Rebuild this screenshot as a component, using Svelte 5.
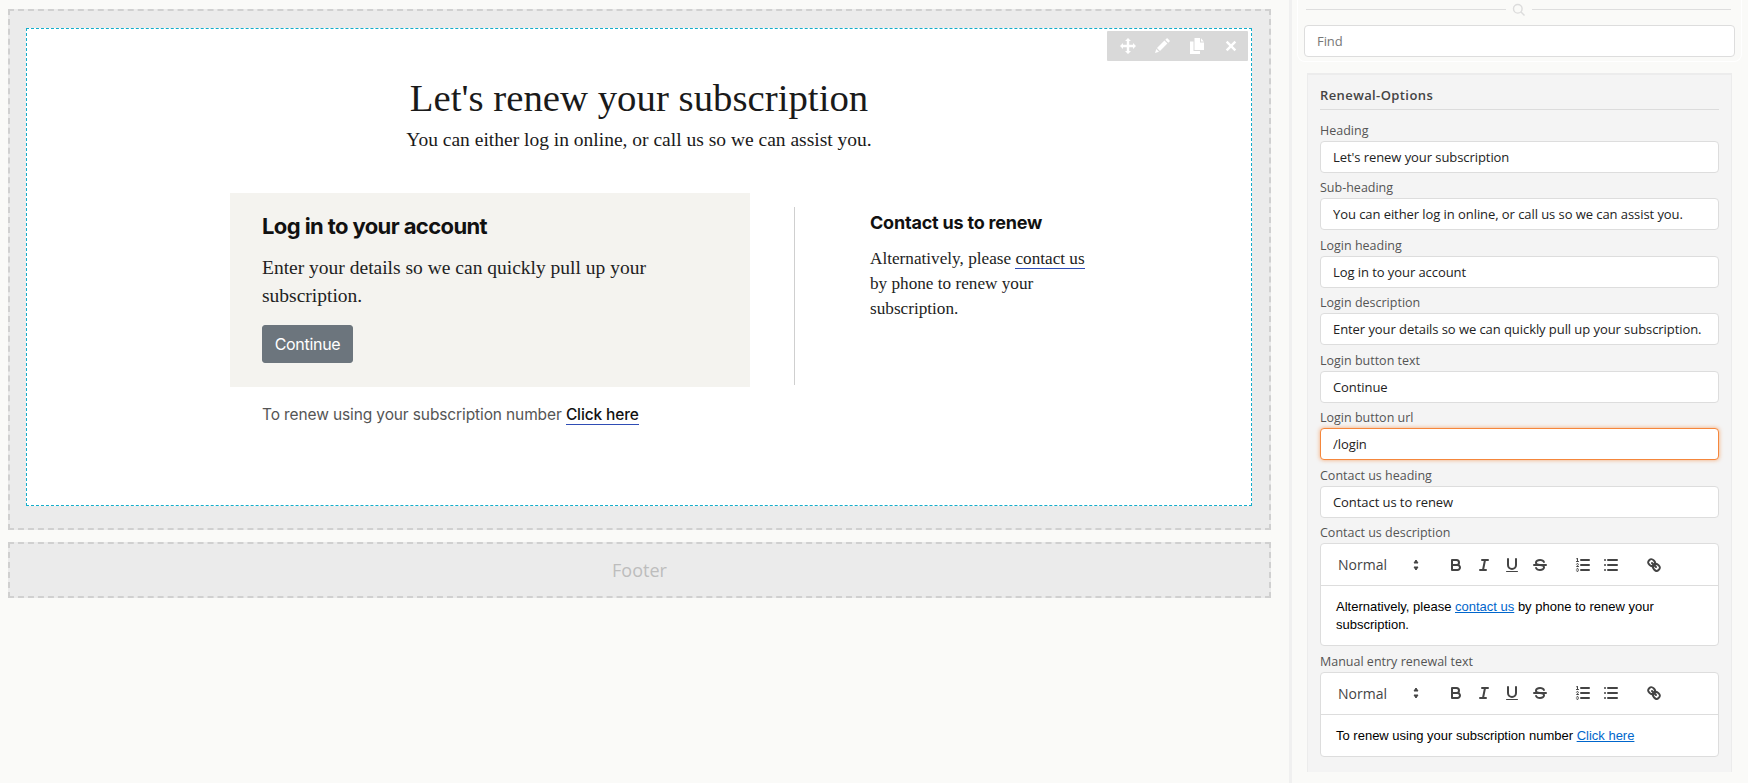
<script>
  const fields = [
    { label: "Heading", value: "Let's renew your subscription" },
    { label: "Sub-heading", value: "You can either log in online, or call us so we can assist you." },
    { label: "Login heading", value: "Log in to your account" },
    { label: "Login description", value: "Enter your details so we can quickly pull up your subscription." },
    { label: "Login button text", value: "Continue" },
    { label: "Login button url", value: "/login", focused: true },
    { label: "Contact us heading", value: "Contact us to renew" }
  ]
</script>

{#snippet toolbar()}
  <div class="ql-toolbar">
    <div class="picker">
      <span>Normal</span>
      <svg class="updown" viewBox="0 0 18 18" width="18" height="18">
        <polygon points="7 7 9 4 11 7" />
        <polygon points="7 11 9 14 11 11" />
      </svg>
    </div>
    <div class="group">
      <svg viewBox="0 0 18 18">
        <path d="M5,4H9.5A2.5,2.5,0,0,1,12,6.5v0A2.5,2.5,0,0,1,9.5,9H5V4Z" />
        <path d="M5,9h5.5A2.5,2.5,0,0,1,13,11.5v0A2.5,2.5,0,0,1,10.5,14H5V9Z" />
      </svg>
      <svg viewBox="0 0 18 18">
        <line x1="7" x2="13" y1="4" y2="4" />
        <line x1="5" x2="11" y1="14" y2="14" />
        <line x1="8" x2="10" y1="14" y2="4" />
      </svg>
      <svg viewBox="0 0 18 18">
        <path d="M5,3V9a4,4,0,0,0,4,4H9a4,4,0,0,0,4-4V3" />
        <rect class="fill" height="1" rx="0.5" ry="0.5" width="12" x="3" y="15" />
      </svg>
      <svg viewBox="0 0 18 18">
        <line x1="3" x2="15" y1="9" y2="9" />
        <path class="fill" d="M9.007,8C6.542,7.791,6,7.519,6,6.5,6,5.792,7.283,5,9,5c1.571,0,2.765.679,2.969,1.309a1,1,0,0,0,1.9-.617C13.356,4.106,11.354,3,9,3,6.2,3,4,4.538,4,6.5a3.2,3.2,0,0,0,.5,1.843Z" />
        <path class="fill" d="M8.984,10C11.457,10.208,12,10.479,12,11.5c0,.708-1.283,1.5-3,1.5-1.571,0-2.765-.679-2.969-1.309a1,1,0,1,0-1.9.617C4.644,13.894,6.646,15,9,15c2.8,0,5-1.538,5-3.5a3.2,3.2,0,0,0-.5-1.843Z" />
      </svg>
    </div>
    <div class="group">
      <svg viewBox="0 0 18 18">
        <line x1="7" x2="15" y1="4" y2="4" />
        <line x1="7" x2="15" y1="9" y2="9" />
        <line x1="7" x2="15" y1="14" y2="14" />
        <line class="thin" x1="2.5" x2="4.5" y1="5.5" y2="5.5" />
        <path class="fill" d="M3.5,6A0.5,0.5,0,0,1,3,5.5V3.085l-0.276.138A0.5,0.5,0,0,1,2.053,3c-0.124-.247-0.023-0.324.224-0.447l1-.5A0.5,0.5,0,0,1,4,2.5v3A0.5,0.5,0,0,1,3.5,6Z" />
        <path class="thin" d="M4.5,10.5h-2c0-.234,1.85-1.076,1.85-2.234A0.959,0.959,0,0,0,2.5,8.156" />
        <path class="thin" d="M2.5,14.846a0.959,0.959,0,0,0,1.85-.109A0.7,0.7,0,0,0,3.75,14a0.688,0.688,0,0,0,.6-0.736,0.959,0.959,0,0,0-1.85-.109" />
      </svg>
      <svg viewBox="0 0 18 18">
        <line x1="6" x2="15" y1="4" y2="4" />
        <line x1="6" x2="15" y1="9" y2="9" />
        <line x1="6" x2="15" y1="14" y2="14" />
        <line x1="3" x2="3" y1="4" y2="4" />
        <line x1="3" x2="3" y1="9" y2="9" />
        <line x1="3" x2="3" y1="14" y2="14" />
      </svg>
    </div>
    <div class="group">
      <svg viewBox="0 0 18 18">
        <line x1="7" x2="11" y1="7" y2="11" />
        <path d="M8.9,4.577a3.476,3.476,0,0,1,.36,4.679A3.476,3.476,0,0,1,4.577,8.9C3.185,7.5,2.035,6.4,4.217,4.217S7.5,3.185,8.9,4.577Z" />
        <path d="M13.423,9.1a3.476,3.476,0,0,0-4.679-.36,3.476,3.476,0,0,0,.36,4.679c1.392,1.392,2.5,2.542,4.679.36S14.815,10.5,13.423,9.1Z" />
      </svg>
    </div>
  </div>
{/snippet}

<div class="page">
  <main>
    <section class="region">
      <div class="block">
        <div class="actions">
          <svg viewBox="0 0 16 16"><path d="M8 0l3 3H9.200v3.800H13V5l3 3-3 3V9.200H9.200V13H11l-3 3-3-3h1.800V9.200H3V11L0 8l3-3v1.800h3.800V3H5z" /></svg>
          <svg viewBox="0 0 16 16"><path d="M3 10l7.400-7.400 3 3L6 13zM2.300 11L5 13.700 1 15zM11.300 1.700L12.600.4c.3-.3.7-.3 1 0l2 2c.3.3.3.7 0 1l-1.300 1.300z" /></svg>
          <svg viewBox="0 0 16 16"><path d="M1 3.500h3.500V13H11v3H1zM5.500 0H11v4.500h4V12H5.500zM12 .3L14.800 3.500H12z" /></svg>
          <svg viewBox="0 0 16 16"><path d="M4.500 2.800L8 6.300l3.500-3.500 1.700 1.700L9.700 8l3.500 3.500-1.700 1.700L8 9.700l-3.500 3.500-1.700-1.700L6.300 8 2.800 4.500z" /></svg>
        </div>
        <header class="intro">
          <h1>Let's renew your subscription</h1>
          <p>You can either log in online, or call us so we can assist you.</p>
        </header>
        <div class="options">
          <div class="login">
            <h2>Log in to your account</h2>
            <p>Enter your details so we can quickly pull up your subscription.</p>
            <button type="button">Continue</button>
          </div>
          <div class="contact">
            <h3>Contact us to renew</h3>
            <p>Alternatively, please <a href="#contact">contact us</a> by phone to renew your subscription.</p>
          </div>
        </div>
        <p class="manual">To renew using your subscription number <a href="#manual">Click here</a></p>
      </div>
    </section>
    <section class="region footer">Footer</section>
  </main>

  <aside>
    <div class="search">
      <div class="search-rule">
        <svg viewBox="0 0 14 14" width="14" height="14"><circle cx="5.800" cy="5.800" r="4.300" /><line x1="9" y1="9" x2="12.500" y2="12.500" /></svg>
      </div>
      <input type="text" placeholder="Find" />
    </div>
    <div class="panel">
      <h4>Renewal-Options</h4>
      {#each fields as field}
        <label class="field">
          <span class="caption">{field.label}</span>
          <input type="text" class:focused={field.focused} value={field.value} />
        </label>
      {/each}
      <div class="field">
        <span class="caption">Contact us description</span>
        <div class="editor">
          {@render toolbar()}
          <div class="ql-editor">Alternatively, please <a href="#contact">contact us</a> by phone to renew your subscription.</div>
        </div>
      </div>
      <div class="field">
        <span class="caption">Manual entry renewal text</span>
        <div class="editor">
          {@render toolbar()}
          <div class="ql-editor">To renew using your subscription number <a href="#manual">Click here</a></div>
        </div>
      </div>
    </div>
  </aside>
</div>

<style>
  :global(body) {
    margin: 0;
    background: #fafaf8;
  }

  .page {
    display: flex;
    height: 783px;
    overflow: hidden;
    background: #fafaf8;
  }

  main {
    width: 1289px;
    box-sizing: border-box;
    padding: 9px 18px 0 8px;
    display: flex;
    flex-direction: column;
    gap: 12px;
  }

  .region {
    background: #ebebeb;
    border: 2px dashed #d0d0d0;
    padding: 17px 17px 22px 16px;
  }

  .region.footer {
    height: 52px;
    padding: 0;
    display: flex;
    align-items: center;
    justify-content: center;
    font: 18px "Open Sans", sans-serif;
    color: #bdbdbd;
  }

  .block {
    position: relative;
    background: #fff;
    border: 1px dashed #14aecb;
    height: 478px;
    box-sizing: border-box;
  }

  .actions {
    position: absolute;
    top: 2px;
    right: 3px;
    width: 141px;
    height: 30px;
    background: #d9d9d9;
    border-radius: 1px;
    display: flex;
    align-items: center;
    justify-content: space-between;
    box-sizing: border-box;
    padding: 0 9px 0 13px;
  }

  .actions svg {
    width: 16px;
    height: 16px;
    fill: #fff;
  }

  .intro {
    text-align: center;
    padding-top: 44px;
    font-family: "Liberation Serif", serif;
    color: #1a1a1a;
  }

  h1 {
    margin: 0;
    font-size: 38.800px;
    font-weight: 400;
    line-height: 50px;
  }

  .intro p {
    margin: 3px 0 0;
    font-size: 19.500px;
    line-height: 28px;
  }

  .options {
    display: flex;
    margin: 39px 0 0 203px;
  }

  .login {
    width: 520px;
    height: 194px;
    box-sizing: border-box;
    background: #f4f3ef;
    padding: 19px 32px 0;
  }

  h2 {
    margin: 0;
    font: 700 22px/28px Inter, sans-serif;
    color: #111;
    letter-spacing: -0.6px;
  }

  .login p {
    margin: 14px 0 0;
    font: 19.500px/28px "Liberation Serif", serif;
    color: #222;
  }

  .login button {
    margin-top: 15px;
    width: 91px;
    height: 38px;
    background: #6c757d;
    border: 1px solid #6c757d;
    border-radius: 3px;
    color: #fff;
    font: 16px Inter, sans-serif;
    letter-spacing: -0.3px;
    padding: 0;
  }

  .contact {
    margin: 14px 0 0 44px;
    height: 178px;
    border-left: 1px solid #cfcfcf;
    padding-left: 75px;
    width: 225px;
    box-sizing: content-box;
  }

  h3 {
    margin: 4px 0 0;
    font: 700 18px/24px Inter, sans-serif;
    letter-spacing: -0.2px;
    color: #111;
  }

  .contact p {
    margin: 11px 0 0;
    font: 17.200px/25px "Liberation Serif", serif;
    color: #222;
  }

  .contact a {
    color: inherit;
    text-decoration: none;
    border-bottom: 1px solid #2f4db5;
  }

  .manual {
    margin: 15px 0 0 235px;
    font: 15.500px/26px Inter, sans-serif;
    letter-spacing: -0.12px;
    color: #555;
  }

  .manual a {
    color: #111;
    font-weight: 500;
    text-decoration: none;
    border-bottom: 1px solid #2f4db5;
  }

  aside {
    width: 459px;
    box-sizing: border-box;
    border-left: 3px solid #f0f0f0;
    padding: 0 16px 0 15px;
    font-family: "Open Sans", sans-serif;
  }

  .search {
    border: 1px solid #fff;
    border-top: 0;
    border-radius: 0 0 8px 8px;
    margin: 0 -10px 0 -10px;
    height: 62px;
    box-sizing: border-box;
    padding: 0 6px;
  }

  .search-rule {
    height: 25px;
    display: flex;
    align-items: center;
    gap: 6px;
    padding: 0 4px 6px 2px;
    box-sizing: border-box;
  }

  .search-rule::before,
  .search-rule::after {
    content: "";
    flex: 1;
    border-top: 1px solid #dedede;
  }

  .search-rule svg {
    fill: none;
    stroke: #dcdcdc;
    stroke-width: 1.400;
  }

  input {
    display: block;
    width: 100%;
    height: 32px;
    box-sizing: border-box;
    background: #fff;
    border: 1px solid #ddd;
    border-radius: 4px;
    padding: 0 12px;
    font: 13px "Open Sans", sans-serif;
    letter-spacing: -0.07px;
    color: #222;
    outline: none;
  }

  input::placeholder {
    color: #777;
  }

  input.focused {
    border-color: #f5873c;
    box-shadow: 0 0 4px rgba(245, 135, 60, 0.7);
  }

  .panel {
    margin-top: 11px;
    background: #f4f4f4;
    border: 1px solid #ececec;
    border-top-width: 2px;
    border-bottom: 0;
    height: 699px;
    box-sizing: border-box;
    padding: 0 12px;
  }

  h4 {
    margin: 0 0 5px;
    height: 34px;
    line-height: 40px;
    font-size: 13px;
    font-weight: 600;
    color: #444;
    border-bottom: 1px solid #dcdcdc;
    letter-spacing: 0.4px;
  }

  .field {
    display: block;
    padding-top: 4.500px;
  }

  .caption {
    display: block;
    height: 21px;
    line-height: 21px;
    font-size: 12.500px;
    color: #555;
  }

  .editor {
    background: #fff;
    border: 1px solid #ddd;
    border-radius: 4px;
  }

  .ql-toolbar {
    display: flex;
    align-items: center;
    height: 41px;
    padding-left: 8px;
    border-bottom: 1px solid #ddd;
  }

  .picker {
    width: 98px;
    box-sizing: border-box;
    padding: 0 2px 0 9px;
    font-size: 14px;
    color: #444;
    margin-right: 15px;
    display: flex;
    align-items: center;
    justify-content: space-between;
  }

  .updown polygon {
    fill: #444;
    stroke: #444;
  }

  .group {
    display: flex;
    margin-right: 15px;
  }

  .group svg {
    width: 28px;
    height: 18px;
    fill: none;
    stroke: #444;
    stroke-width: 2;
    stroke-linecap: round;
    stroke-linejoin: round;
  }

  .group .fill {
    fill: #444;
    stroke: none;
  }

  .group .thin {
    stroke-width: 1;
  }

  .ql-editor {
    padding: 12px 15px 11px;
    font: 13px/18px "Liberation Sans", sans-serif;
    color: #000;
  }

  .ql-editor a {
    color: #06c;
  }
</style>
